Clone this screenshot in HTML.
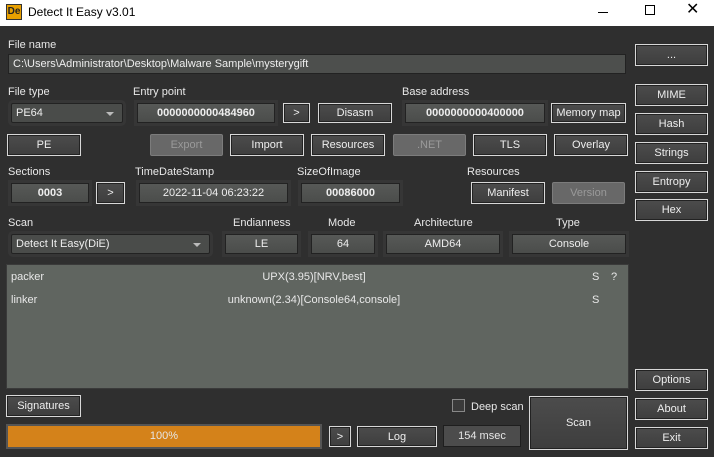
<!DOCTYPE html>
<html><head><meta charset="utf-8"><style>
*{box-sizing:border-box;margin:0;padding:0}
body{width:714px;height:457px;background:#2f2f2f;font-family:"Liberation Sans",sans-serif;font-size:11px;color:#e6e6e6;position:relative;overflow:hidden}
.a{position:absolute}
.lbl{position:absolute;font-size:11px;color:#e8e8e8;line-height:12px}
.btn{position:absolute;border:1px solid #d8d8d8;background:linear-gradient(#4c4c4c,#3e3e3e);color:#eee;text-align:center;display:flex;align-items:center;justify-content:center;box-shadow:inset 0 0 0 1px #222}
.dis{position:absolute;border:1px solid #7c7c7c;background:#686868;color:#9a9a9a;text-align:center;display:flex;align-items:center;justify-content:center;border-radius:2px}
.fld{position:absolute;border:1px solid #222;background:linear-gradient(#575957,#4b4d4b);color:#eee;text-align:center;display:flex;align-items:center;justify-content:center;outline:3px solid #363636}
.b{font-weight:bold}
.combo{position:absolute;border:1px solid #222;background:#4a4c4a;color:#eee;display:flex;align-items:center;padding-left:4px;border-radius:2px;outline:3px solid #363636}
.combo:after{content:"";position:absolute;right:8px;top:8px;border:4px solid transparent;border-top:4px solid #bbb}
</style></head><body>
<div class="a" style="left:0;top:0;width:714px;height:26px;background:#fff"></div>
<div class="a" style="left:6px;top:4px;width:16px;height:16px;background:#e8a000;border:1px solid #333;font-size:10px;font-weight:bold;color:#222;line-height:14px;text-align:center">De</div>
<div class="a" style="left:28px;top:5px;color:#000;font-size:12px">Detect It Easy v3.01</div>
<div class="a" style="left:598px;top:12px;width:10px;height:1px;background:#000"></div>
<div class="a" style="left:645px;top:5px;width:10px;height:10px;border:1px solid #000"></div>
<div class="a" style="left:686px;top:0px;color:#000;font-size:16px;line-height:20px">✕</div>

<div class="lbl" style="left:8px;top:39px">File name</div>
<div class="a" style="left:8px;top:54px;width:618px;height:20px;background:#4d4f4d;border:1px solid #222;padding-left:4px;line-height:18px;color:#eee">C:\Users\Administrator\Desktop\Malware Sample\mysterygift</div>
<div class="btn" style="left:635px;top:44px;width:73px;height:22px">...</div>

<div class="lbl" style="left:8px;top:86px">File type</div>
<div class="combo" style="left:11px;top:103px;width:112px;height:20px">PE64</div>
<div class="lbl" style="left:133px;top:86px">Entry point</div>
<div class="fld b" style="left:137px;top:103px;width:138px;height:20px">0000000000484960</div>
<div class="btn" style="left:283px;top:103px;width:27px;height:20px">&gt;</div>
<div class="btn" style="left:318px;top:103px;width:74px;height:20px">Disasm</div>
<div class="lbl" style="left:402px;top:86px">Base address</div>
<div class="fld b" style="left:405px;top:103px;width:140px;height:20px">0000000000400000</div>
<div class="btn" style="left:551px;top:103px;width:75px;height:20px">Memory map</div>

<div class="btn" style="left:7px;top:134px;width:74px;height:22px">PE</div>
<div class="dis" style="left:150px;top:134px;width:73px;height:22px">Export</div>
<div class="btn" style="left:230px;top:134px;width:74px;height:22px">Import</div>
<div class="btn" style="left:311px;top:134px;width:74px;height:22px">Resources</div>
<div class="dis" style="left:393px;top:134px;width:73px;height:22px">.NET</div>
<div class="btn" style="left:473px;top:134px;width:74px;height:22px">TLS</div>
<div class="btn" style="left:554px;top:134px;width:74px;height:22px">Overlay</div>

<div class="lbl" style="left:8px;top:166px">Sections</div>
<div class="fld b" style="left:11px;top:183px;width:78px;height:20px">0003</div>
<div class="btn" style="left:96px;top:182px;width:29px;height:22px">&gt;</div>
<div class="lbl" style="left:135px;top:166px">TimeDateStamp</div>
<div class="fld" style="left:139px;top:183px;width:149px;height:20px">2022-11-04 06:23:22</div>
<div class="lbl" style="left:297px;top:166px">SizeOfImage</div>
<div class="fld b" style="left:301px;top:183px;width:99px;height:20px">00086000</div>
<div class="lbl" style="left:467px;top:166px">Resources</div>
<div class="btn" style="left:471px;top:182px;width:74px;height:22px">Manifest</div>
<div class="dis" style="left:552px;top:182px;width:73px;height:22px">Version</div>

<div class="lbl" style="left:8px;top:217px">Scan</div>
<div class="combo" style="left:11px;top:234px;width:199px;height:20px">Detect It Easy(DiE)</div>
<div class="lbl" style="left:233px;top:217px">Endianness</div>
<div class="fld" style="left:225px;top:234px;width:73px;height:20px">LE</div>
<div class="lbl" style="left:328px;top:217px">Mode</div>
<div class="fld" style="left:311px;top:234px;width:64px;height:20px">64</div>
<div class="lbl" style="left:414px;top:217px">Architecture</div>
<div class="fld" style="left:386px;top:234px;width:114px;height:20px">AMD64</div>
<div class="lbl" style="left:556px;top:217px">Type</div>
<div class="fld" style="left:512px;top:234px;width:114px;height:20px">Console</div>

<div class="a" style="left:6px;top:264px;width:623px;height:125px;background:#606560;border:1px solid #3a3a3a"></div>
<div class="lbl" style="left:11px;top:271px">packer</div>
<div class="lbl" style="left:194px;top:271px;width:240px;text-align:center">UPX(3.95)[NRV,best]</div>
<div class="lbl" style="left:592px;top:271px">S</div>
<div class="lbl" style="left:611px;top:271px">?</div>
<div class="lbl" style="left:11px;top:294px">linker</div>
<div class="lbl" style="left:184px;top:294px;width:260px;text-align:center">unknown(2.34)[Console64,console]</div>
<div class="lbl" style="left:592px;top:294px">S</div>

<div class="btn" style="left:635px;top:84px;width:73px;height:22px">MIME</div>
<div class="btn" style="left:635px;top:113px;width:73px;height:22px">Hash</div>
<div class="btn" style="left:635px;top:142px;width:73px;height:22px">Strings</div>
<div class="btn" style="left:635px;top:171px;width:73px;height:22px">Entropy</div>
<div class="btn" style="left:635px;top:199px;width:73px;height:22px">Hex</div>
<div class="btn" style="left:635px;top:369px;width:73px;height:22px">Options</div>
<div class="btn" style="left:635px;top:398px;width:73px;height:22px">About</div>
<div class="btn" style="left:635px;top:427px;width:73px;height:22px">Exit</div>

<div class="btn" style="left:6px;top:395px;width:75px;height:22px">Signatures</div>
<div class="a" style="left:452px;top:399px;width:13px;height:13px;border:1px solid #888;background:#3a3a3a"></div>
<div class="lbl" style="left:471px;top:401px">Deep scan</div>
<div class="btn" style="left:529px;top:396px;width:99px;height:54px">Scan</div>
<div class="a" style="left:6px;top:424px;width:316px;height:25px;background:#d4821a;border:2px solid #555;text-align:center;line-height:21px">100%</div>
<div class="btn" style="left:329px;top:426px;width:22px;height:21px">&gt;</div>
<div class="btn" style="left:357px;top:426px;width:80px;height:21px">Log</div>
<div class="a" style="left:443px;top:425px;width:78px;height:22px;background:#4c4c4c;border:1px solid #1e1e1e;text-align:center;line-height:20px">154 msec</div>
</body></html>
